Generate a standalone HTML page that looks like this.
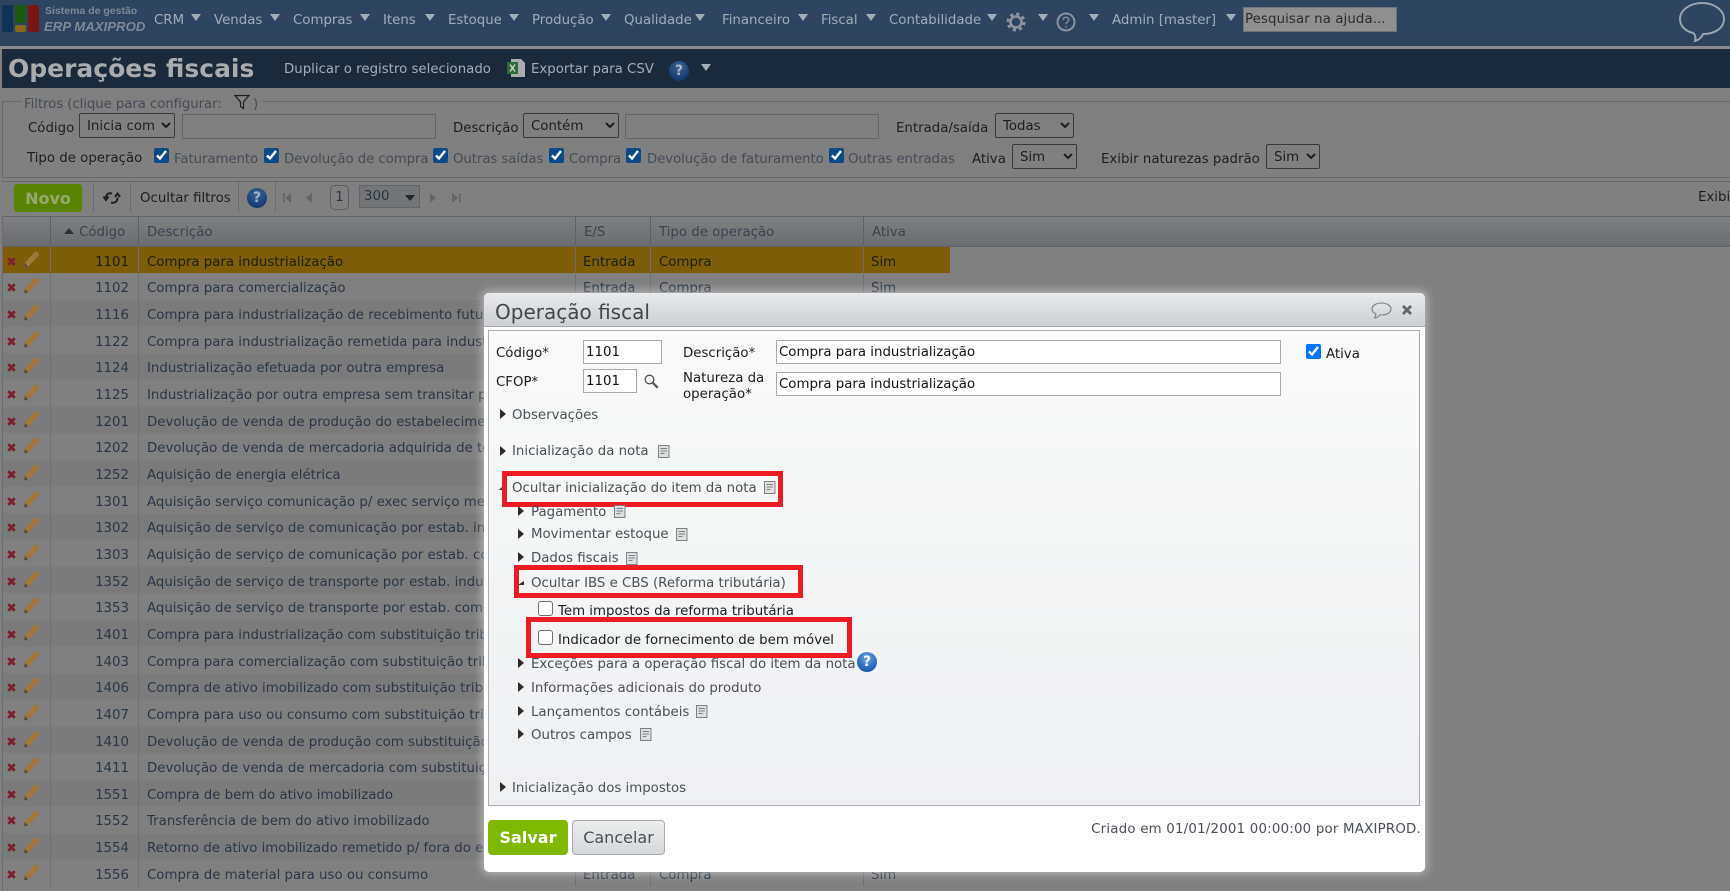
<!DOCTYPE html>
<html lang="pt-BR"><head><meta charset="utf-8"><title>Operações fiscais</title>
<style>
html,body{margin:0;padding:0;width:1730px;height:891px;overflow:hidden;background:#808080}
body{position:relative;font:13.33px/16px "DejaVu Sans",sans-serif;color:#1e2024}
.t{position:absolute;white-space:nowrap;line-height:16px}
.abs{position:absolute}
.nav{color:#a2acb8;top:13px}
.ar{position:absolute;width:0;height:0;border-left:5px solid transparent;border-right:5px solid transparent;border-top:7px solid #a4acb6}
.lab{color:#1c1e22}
.gr{color:#454c55;letter-spacing:-.08px}
.f input[type=checkbox]{position:absolute;margin:0;width:15px;height:15px;accent-color:#0a4a88}
select{position:absolute;margin:0;font:13.33px "DejaVu Sans",sans-serif;color:#1c1e22;background:#808080;border:1px solid #3a3a3a;border-radius:2px;padding:2px 0 0 3px}
.tx{position:absolute;box-sizing:border-box;background:#808080;border:1px solid #62656a}
.sep{position:absolute;width:1px;background:#6a6d72}
.hd{position:absolute;top:216px;left:2px;width:1728px;height:31px;background:linear-gradient(#7f8082,#6a6c70);border-top:1px solid #62656a;border-bottom:1px solid #5d6167;box-sizing:border-box}
.ht{color:#39424e;top:225px}
#rows{position:absolute;left:3px;top:246.7px;width:947px}
.r{position:relative;height:26.67px;background:#7b7b7b;color:#2a3646}
.r:nth-child(even){background:#808080}
.r.s{background:#7f5d08;color:#1a1f10}
.r span{position:absolute;top:8px;line-height:16px;white-space:nowrap}
.c1{left:62px;width:64px;text-align:right}.c2{left:144px;width:425px;overflow:hidden}.c3{left:580px}.c4{left:656px}.c5{left:868px}
.r svg{position:absolute}
.r .x{left:4px;top:10px}.r .p{left:20px;top:4px}
.r:after{content:"";position:absolute;left:47px;top:0;bottom:0;width:1px;background:#6e7073;box-shadow:88px 0 #6e7073,525px 0 #6e7073,600px 0 #6e7073,813px 0 #6e7073}
#dlg{position:absolute;left:484px;top:293px;width:941px;height:579px;background:#fff;border-radius:5px;box-shadow:0 0 9px 2px rgba(255,255,255,.45);color:#3d4248}
#dh{position:absolute;left:0;top:0;width:941px;height:33px;background:linear-gradient(#e9eaec,#cdcfd3);border-bottom:1px solid #a9adb3;border-radius:5px 5px 0 0}
#pn{position:absolute;left:4px;top:37px;width:932px;height:476px;box-sizing:border-box;border:1px solid #a9adb3;background:linear-gradient(#f9faf9,#eff0f2)}
#dlg .t{color:#4b5056}
#dlg .k{color:#1b1d20}
.fi{position:absolute;box-sizing:border-box;background:#fff;border:1px solid #a8a9aa;font:13.33px/23px "DejaVu Sans",sans-serif;color:#111;padding-left:2px;white-space:nowrap;overflow:hidden}
.tr{position:absolute;width:0;height:0;border-top:5px solid transparent;border-bottom:5px solid transparent;border-left:6px solid #2c2c2c}
.rb{position:absolute;box-sizing:border-box;border:5px solid #ed1c24}
.cb{position:absolute;width:15px;height:15px;box-sizing:border-box;background:#fff;border:1px solid #6f6f6f;border-radius:3px}
.nt{position:absolute;width:12px;height:13px}
.h{position:absolute;border-radius:50%;background:radial-gradient(circle at 50% 30%,#69a6e6,#1d5cb0 75%);color:#fff;font:bold 14px/20px "DejaVu Sans",sans-serif;text-align:center;width:20px;height:20px}
.h.dim{background:radial-gradient(circle at 50% 30%,#3c6492,#143a6e 75%);color:#a9b6c6}
</style></head><body>
<svg width="0" height="0" style="position:absolute"><defs>
<symbol id="x" viewBox="0 0 9 9"><path d="M1.300 1.300 7.700 7.700M7.700 1.300 1.300 7.700" stroke="#7d1f2c" stroke-width="2.800" fill="none"/></symbol>
<symbol id="pen" viewBox="0 0 17 17"><path d="M1 16.500l.8-4.800L12 .8c1.200-1.200 5 2.200 3.800 3.700L5.200 15.500z" fill="#a3763a"/><path d="M1 16.500l.8-4.800 3.400 3.800z" fill="#5a5040"/></symbol>
<symbol id="nt" viewBox="0 0 12 13"><path d="M.5.5h10.500v12H.5z" fill="#dedfe0" stroke="#7f8285"/><path d="M2.500 3.500h6.500M2.500 6h6.500M2.500 8.500h4" stroke="#7f8285"/></symbol>
</defs></svg>

<!-- Topbar -->
<div class="abs" style="left:0;top:0;width:1730px;height:46px;background:linear-gradient(#2e4561,#2e425c)"></div>
<div class="abs" style="left:0;top:46px;width:1730px;height:3px;background:#8b8b8b"></div>
<div class="abs" style="left:2px;top:5px;width:11px;height:27px;background:#0c3456;border-radius:2px"></div>
<div class="abs" style="left:15px;top:5px;width:11px;height:18px;background:#1c5a14;border-radius:2px"></div>
<div class="abs" style="left:15px;top:25px;width:11px;height:7px;background:#886a12;border-radius:2px"></div>
<div class="abs" style="left:28px;top:5px;width:11px;height:27px;background:#7b1616;border-radius:2px"></div>
<div class="t" style="left:45px;top:3px;color:#7f8894;font:bold 10.500px/16px 'Liberation Sans',sans-serif">Sistema de gestão</div>
<div class="t" style="left:44px;top:18px;color:#7f8894;font:italic bold 13.200px/18px 'Liberation Sans',sans-serif">ERP MAXIPROD</div>
<div class="t nav" style="left:154px">CRM</div><div class="ar" style="left:191px;top:14px"></div>
<div class="t nav" style="left:214px">Vendas</div><div class="ar" style="left:270px;top:14px"></div>
<div class="t nav" style="left:293px">Compras</div><div class="ar" style="left:360px;top:14px"></div>
<div class="t nav" style="left:383px">Itens</div><div class="ar" style="left:425px;top:14px"></div>
<div class="t nav" style="left:448px">Estoque</div><div class="ar" style="left:509px;top:14px"></div>
<div class="t nav" style="left:532px">Produção</div><div class="ar" style="left:601px;top:14px"></div>
<div class="t nav" style="left:624px">Qualidade</div><div class="ar" style="left:695px;top:14px"></div>
<div class="t nav" style="left:722px">Financeiro</div><div class="ar" style="left:798px;top:14px"></div>
<div class="t nav" style="left:821px">Fiscal</div><div class="ar" style="left:866px;top:14px"></div>
<div class="t nav" style="left:889px">Contabilidade</div><div class="ar" style="left:987px;top:14px"></div>
<svg class="abs" style="left:1006px;top:12px" width="20" height="20" viewBox="0 0 20 20"><g fill="none" stroke="#8b929b"><circle cx="10" cy="10" r="5.500" stroke-width="2.600"/><circle cx="10" cy="10" r="8" stroke-width="3" stroke-dasharray="3.200 3.080"/></g></svg>
<div class="ar" style="left:1038px;top:14px"></div>
<svg class="abs" style="left:1056px;top:12px" width="20" height="20" viewBox="0 0 20 20"><circle cx="10" cy="10" r="8.500" fill="none" stroke="#8b929b" stroke-width="2"/><path d="M7.300 7.800c0-3.500 5.400-3.500 5.400 0 0 2.200-2.700 2.200-2.700 4.500M10 14v1.500" fill="none" stroke="#8b929b" stroke-width="1.400"/></svg>
<div class="ar" style="left:1089px;top:14px"></div>
<div class="t nav" style="left:1112px">Admin [master]</div><div class="ar" style="left:1226px;top:14px"></div>
<div class="abs" style="left:1243px;top:7px;width:154px;height:25px;background:#8f8f8f;border:1px solid #6f7378;box-sizing:border-box"></div>
<div class="t" style="left:1245px;top:12px;color:#2a2c30;letter-spacing:.1px">Pesquisar na ajuda...</div>
<svg class="abs" style="left:1678px;top:1px" width="48" height="42" viewBox="0 0 48 42"><path d="M24 2C12 2 2 9 2 18c0 7 5 12 13 14 2 1 3 4 2 8 4-1 7-4 8-7C37 33 46 27 46 18 46 9 36 2 24 2z" fill="none" stroke="#9aa3ad" stroke-width="2"/></svg>

<!-- Title bar -->
<div class="abs" style="left:2px;top:49px;width:1728px;height:39px;background:#1a2a3a"></div>
<div class="t" style="left:8px;top:55px;color:#a9abad;font:bold 25px/28px 'DejaVu Sans',sans-serif">Operações fiscais</div>
<div class="t" style="left:284px;top:62px;color:#a2acb8">Duplicar o registro selecionado</div>
<svg class="abs" style="left:506px;top:58px" width="20" height="20" viewBox="0 0 20 20"><path d="M5 1h10l4 4v14H5z" fill="#a9aeb0"/><path d="M1 4h11v12H1z" fill="#2d6a34"/><path d="M4 6.500l5 7M9 6.500l-5 7" stroke="#c9d4cc" stroke-width="1.500"/></svg>
<div class="t" style="left:531px;top:62px;color:#a2acb8">Exportar para CSV</div>
<div class="h dim" style="left:669px;top:61px">?</div>
<div class="ar" style="left:701px;top:64px"></div>

<!-- Filters -->
<div class="abs" style="left:2px;top:101px;width:1728px;height:77px;box-sizing:border-box;border:1px solid #66696d;border-right:0"></div>
<div class="abs" style="left:22px;top:95px;width:240px;height:12px;background:#808080"></div>
<div class="t gr" style="left:24px;top:97px">Filtros (clique para configurar:</div>
<svg class="abs" style="left:234px;top:94px" width="16" height="16" viewBox="0 0 16 16"><path d="M1 1.500h14L9.500 8v6.500l-3-2V8z" fill="none" stroke="#1c1e22" stroke-width="1.200"/></svg>
<div class="t gr" style="left:253px;top:97px">)</div>
<div class="f">
<div class="t lab" style="left:28px;top:121px">Código</div>
<select style="left:79px;top:113px;width:96px;height:25px"><option>Inicia com</option></select>
<div class="tx" style="left:182px;top:114px;width:254px;height:25px"></div>
<div class="t lab" style="left:453px;top:121px">Descrição</div>
<select style="left:523px;top:113px;width:96px;height:25px"><option>Contém</option></select>
<div class="tx" style="left:625px;top:114px;width:254px;height:25px"></div>
<div class="t lab" style="left:896px;top:121px">Entrada/saída</div>
<select style="left:995px;top:113px;width:79px;height:25px"><option>Todas</option></select>
<div class="t lab" style="left:27px;top:151px">Tipo de operação</div>
<input type="checkbox" checked style="left:154px;top:148px"><div class="t gr" style="left:174px;top:152px">Faturamento</div>
<input type="checkbox" checked style="left:264px;top:148px"><div class="t gr" style="left:284px;top:152px">Devolução de compra</div>
<input type="checkbox" checked style="left:433px;top:148px"><div class="t gr" style="left:453px;top:152px">Outras saídas</div>
<input type="checkbox" checked style="left:549px;top:148px"><div class="t gr" style="left:569px;top:152px">Compra</div>
<input type="checkbox" checked style="left:626px;top:148px"><div class="t gr" style="left:647px;top:152px">Devolução de faturamento</div>
<input type="checkbox" checked style="left:829px;top:148px"><div class="t gr" style="left:848px;top:152px">Outras entradas</div>
<div class="t lab" style="left:972px;top:152px">Ativa</div>
<select style="left:1012px;top:144px;width:65px;height:25px"><option>Sim</option></select>
<div class="t lab" style="left:1101px;top:152px">Exibir naturezas padrão</div>
<select style="left:1266px;top:144px;width:54px;height:25px"><option>Sim</option></select>
</div>

<!-- Toolbar -->
<div class="abs" style="left:2px;top:181px;width:1728px;height:1px;background:#66696d"></div>
<div class="abs" style="left:14px;top:184px;width:68px;height:28px;background:#5a8302;border-radius:3px;color:#95a870;font:bold 16px/30px 'DejaVu Sans',sans-serif;text-align:center">Novo</div>
<div class="sep" style="left:93px;top:182px;height:30px"></div>
<svg class="abs" style="left:103px;top:191px" width="18" height="14" viewBox="0 0 18 14"><g fill="none" stroke="#222" stroke-width="2"><path d="M9 2.500C5 1.500 3 3.500 3 7.500M.5 5.500 3 9l2.500-3.500M8 11.500c4 1 6.500-1 6.500-5M12 6l2.500-3.500L17 6"/></g></svg>
<div class="sep" style="left:130px;top:182px;height:30px"></div>
<div class="t lab" style="left:140px;top:191px">Ocultar filtros</div>
<div class="sep" style="left:238px;top:182px;height:30px"></div>
<div class="h dim" style="left:247px;top:188px;color:#9fb1c9">?</div>
<div class="sep" style="left:275px;top:182px;height:30px"></div>
<svg class="abs" style="left:282px;top:192px" width="40" height="12" viewBox="0 0 40 12"><path d="M1 1h1.500v10H1zM9 1v10L3.500 6zM30 1v10l-6-5z" fill="#62656a"/></svg>
<div class="abs" style="left:330px;top:185px;width:19px;height:25px;box-sizing:border-box;border:1px solid #5a5d62;border-radius:5px;text-align:center;line-height:24px;color:#2a3646">1</div>
<div class="abs" style="left:359px;top:185px;width:61px;height:23px;box-sizing:border-box;border:1px solid #62656a;background:#747577"></div>
<div class="t" style="left:364px;top:189px;color:#2a3646">300</div>
<div class="abs" style="left:405px;top:195px;width:0;height:0;border-left:5px solid transparent;border-right:5px solid transparent;border-top:6px solid #23262a"></div>
<svg class="abs" style="left:428px;top:192px" width="36" height="12" viewBox="0 0 36 12"><path d="M2 1v10l6-5zM24 1v10l6-5zM31 1h1.500v10H31z" fill="#62656a"/></svg>
<div class="t lab" style="left:1698px;top:190px">Exibi</div>

<!-- Table head -->
<div class="hd"></div>
<div class="sep" style="left:50px;top:216px;height:31px;background:#5d6167"></div>
<div class="sep" style="left:138px;top:216px;height:31px;background:#5d6167"></div>
<div class="sep" style="left:575px;top:216px;height:31px;background:#5d6167"></div>
<div class="sep" style="left:650px;top:216px;height:31px;background:#5d6167"></div>
<div class="sep" style="left:863px;top:216px;height:31px;background:#5d6167"></div>
<div class="abs" style="left:64px;top:228px;width:0;height:0;border-left:5px solid transparent;border-right:5px solid transparent;border-bottom:6px solid #2c2f33"></div>
<div class="t ht" style="left:79px">Código</div>
<div class="t ht" style="left:147px">Descrição</div>
<div class="t ht" style="left:584px">E/S</div>
<div class="t ht" style="left:659px">Tipo de operação</div>
<div class="t ht" style="left:872px">Ativa</div>

<div class="abs" style="left:2px;top:216px;width:1px;height:675px;background:#6a6d72"></div>
<div id="rows">
<div class="r s"><svg class="x" width="9" height="9"><use href="#x"/></svg><svg class="p" width="17" height="17"><use href="#pen"/></svg><span class="c1">1101</span><span class="c2">Compra para industrialização</span><span class="c3">Entrada</span><span class="c4">Compra</span><span class="c5">Sim</span></div>
<div class="r"><svg class="x" width="9" height="9"><use href="#x"/></svg><svg class="p" width="17" height="17"><use href="#pen"/></svg><span class="c1">1102</span><span class="c2">Compra para comercialização</span><span class="c3">Entrada</span><span class="c4">Compra</span><span class="c5">Sim</span></div>
<div class="r"><svg class="x" width="9" height="9"><use href="#x"/></svg><svg class="p" width="17" height="17"><use href="#pen"/></svg><span class="c1">1116</span><span class="c2">Compra para industrialização de recebimento futuro</span></div>
<div class="r"><svg class="x" width="9" height="9"><use href="#x"/></svg><svg class="p" width="17" height="17"><use href="#pen"/></svg><span class="c1">1122</span><span class="c2">Compra para industrialização remetida para industrialização</span></div>
<div class="r"><svg class="x" width="9" height="9"><use href="#x"/></svg><svg class="p" width="17" height="17"><use href="#pen"/></svg><span class="c1">1124</span><span class="c2">Industrialização efetuada por outra empresa</span></div>
<div class="r"><svg class="x" width="9" height="9"><use href="#x"/></svg><svg class="p" width="17" height="17"><use href="#pen"/></svg><span class="c1">1125</span><span class="c2">Industrialização por outra empresa sem transitar pela empresa</span></div>
<div class="r"><svg class="x" width="9" height="9"><use href="#x"/></svg><svg class="p" width="17" height="17"><use href="#pen"/></svg><span class="c1">1201</span><span class="c2">Devolução de venda de produção do estabelecimento</span></div>
<div class="r"><svg class="x" width="9" height="9"><use href="#x"/></svg><svg class="p" width="17" height="17"><use href="#pen"/></svg><span class="c1">1202</span><span class="c2">Devolução de venda de mercadoria adquirida de terceiros</span></div>
<div class="r"><svg class="x" width="9" height="9"><use href="#x"/></svg><svg class="p" width="17" height="17"><use href="#pen"/></svg><span class="c1">1252</span><span class="c2">Aquisição de energia elétrica</span></div>
<div class="r"><svg class="x" width="9" height="9"><use href="#x"/></svg><svg class="p" width="17" height="17"><use href="#pen"/></svg><span class="c1">1301</span><span class="c2">Aquisição serviço comunicação p/ exec serviço mesma natureza</span></div>
<div class="r"><svg class="x" width="9" height="9"><use href="#x"/></svg><svg class="p" width="17" height="17"><use href="#pen"/></svg><span class="c1">1302</span><span class="c2">Aquisição de serviço de comunicação por estab. industrial</span></div>
<div class="r"><svg class="x" width="9" height="9"><use href="#x"/></svg><svg class="p" width="17" height="17"><use href="#pen"/></svg><span class="c1">1303</span><span class="c2">Aquisição de serviço de comunicação por estab. comercial</span></div>
<div class="r"><svg class="x" width="9" height="9"><use href="#x"/></svg><svg class="p" width="17" height="17"><use href="#pen"/></svg><span class="c1">1352</span><span class="c2">Aquisição de serviço de transporte por estab. industrial</span></div>
<div class="r"><svg class="x" width="9" height="9"><use href="#x"/></svg><svg class="p" width="17" height="17"><use href="#pen"/></svg><span class="c1">1353</span><span class="c2">Aquisição de serviço de transporte por estab. comercial</span></div>
<div class="r"><svg class="x" width="9" height="9"><use href="#x"/></svg><svg class="p" width="17" height="17"><use href="#pen"/></svg><span class="c1">1401</span><span class="c2">Compra para industrialização com substituição tributária</span></div>
<div class="r"><svg class="x" width="9" height="9"><use href="#x"/></svg><svg class="p" width="17" height="17"><use href="#pen"/></svg><span class="c1">1403</span><span class="c2">Compra para comercialização com substituição tributária</span></div>
<div class="r"><svg class="x" width="9" height="9"><use href="#x"/></svg><svg class="p" width="17" height="17"><use href="#pen"/></svg><span class="c1">1406</span><span class="c2">Compra de ativo imobilizado com substituição tributária</span></div>
<div class="r"><svg class="x" width="9" height="9"><use href="#x"/></svg><svg class="p" width="17" height="17"><use href="#pen"/></svg><span class="c1">1407</span><span class="c2">Compra para uso ou consumo com substituição tributária</span></div>
<div class="r"><svg class="x" width="9" height="9"><use href="#x"/></svg><svg class="p" width="17" height="17"><use href="#pen"/></svg><span class="c1">1410</span><span class="c2">Devolução de venda de produção com substituição tributária</span></div>
<div class="r"><svg class="x" width="9" height="9"><use href="#x"/></svg><svg class="p" width="17" height="17"><use href="#pen"/></svg><span class="c1">1411</span><span class="c2">Devolução de venda de mercadoria com substituição tributária</span></div>
<div class="r"><svg class="x" width="9" height="9"><use href="#x"/></svg><svg class="p" width="17" height="17"><use href="#pen"/></svg><span class="c1">1551</span><span class="c2">Compra de bem do ativo imobilizado</span></div>
<div class="r"><svg class="x" width="9" height="9"><use href="#x"/></svg><svg class="p" width="17" height="17"><use href="#pen"/></svg><span class="c1">1552</span><span class="c2">Transferência de bem do ativo imobilizado</span></div>
<div class="r"><svg class="x" width="9" height="9"><use href="#x"/></svg><svg class="p" width="17" height="17"><use href="#pen"/></svg><span class="c1">1554</span><span class="c2">Retorno de ativo imobilizado remetido p/ fora do estabelecimento</span></div>
<div class="r"><svg class="x" width="9" height="9"><use href="#x"/></svg><svg class="p" width="17" height="17"><use href="#pen"/></svg><span class="c1">1556</span><span class="c2">Compra de material para uso ou consumo</span><span class="c3">Entrada</span><span class="c4">Compra</span><span class="c5">Sim</span></div>
</div>

<!-- Dialog (coordinates relative to 484,293) -->
<div id="dlg">
<div id="dh"></div>
<div class="t" style="left:11px;top:7px;font-size:20px;line-height:24px;color:#43474c!important">Operação fiscal</div>
<svg class="abs" style="left:887px;top:9px" width="21" height="17" viewBox="0 0 21 17"><path d="M10.500 1C5 1 1 3.700 1 7c0 2 1.500 3.800 4 4.800 0 1.400-.5 2.800-1.300 4 2 0 3.800-1.200 5-2.900.6.100 1.200.100 1.800.100 5.500 0 9.500-2.700 9.500-6S16 1 10.500 1z" fill="none" stroke="#7c8085" stroke-width="1.100"/></svg>
<svg class="abs" style="left:917px;top:11px" width="12" height="12" viewBox="0 0 12 12"><path d="M2 2l8 8M10 2l-8 8" stroke="#62666b" stroke-width="2.800" fill="none"/></svg>
<div id="pn"></div>

<div class="t k" style="left:12px;top:53px">Código*</div>
<div class="fi" style="left:99px;top:47px;width:79px;height:24px">1101</div>
<div class="t k" style="left:12px;top:82px">CFOP*</div>
<div class="fi" style="left:99px;top:76px;width:54px;height:24px">1101</div>
<svg class="abs" style="left:160px;top:81px" width="15" height="15" viewBox="0 0 15 15"><circle cx="5.500" cy="5.500" r="4.300" fill="none" stroke="#555" stroke-width="1.300"/><path d="M8.800 8.800l5 5" stroke="#555" stroke-width="2.200"/></svg>
<div class="t k" style="left:199px;top:53px">Descrição*</div>
<div class="fi" style="left:292px;top:47px;width:505px;height:24px">Compra para industrialização</div>
<div class="t k" style="left:199px;top:78px">Natureza da</div>
<div class="t k" style="left:199px;top:94px">operação*</div>
<div class="fi" style="left:292px;top:79px;width:505px;height:24px">Compra para industrialização</div>
<input type="checkbox" checked style="position:absolute;left:822px;top:51px;margin:0;width:15px;height:15px">
<div class="t k" style="left:842px;top:54px">Ativa</div>

<div class="tr" style="left:16px;top:116px"></div><div class="t" style="left:28px;top:115px">Observações</div>
<div class="tr" style="left:16px;top:153px"></div><div class="t" style="left:28px;top:151px">Inicialização da nota</div><svg class="nt" style="left:174px;top:152px"><use href="#nt"/></svg>
<div class="abs" style="left:15px;top:192px;width:0;height:0;border-left:5px solid transparent;border-bottom:5px solid #2c2c2c"></div>
<div class="t" style="left:28px;top:188px">Ocultar inicialização do item da nota</div><svg class="nt" style="left:280px;top:188px"><use href="#nt"/></svg>
<div class="rb" style="left:18px;top:178px;width:281px;height:36px"></div>

<div class="tr" style="left:34px;top:213px"></div><div class="t" style="left:47px;top:212px">Pagamento</div><svg class="nt" style="left:130px;top:212px"><use href="#nt"/></svg>
<div class="tr" style="left:34px;top:236px"></div><div class="t" style="left:47px;top:234px">Movimentar estoque</div><svg class="nt" style="left:192px;top:235px"><use href="#nt"/></svg>
<div class="tr" style="left:34px;top:259px"></div><div class="t" style="left:47px;top:258px">Dados fiscais</div><svg class="nt" style="left:142px;top:259px"><use href="#nt"/></svg>
<div class="abs" style="left:34px;top:284px;width:0;height:0;border-top:4px solid transparent;border-bottom:4px solid #2c2c2c;border-left:6px solid transparent"></div>
<div class="t" style="left:47px;top:283px">Ocultar IBS e CBS (Reforma tributária)</div>
<div class="rb" style="left:30px;top:272px;width:289px;height:33px"></div>

<div class="cb" style="left:54px;top:308px"></div><div class="t k" style="left:74px;top:311px">Tem impostos da reforma tributária</div>
<div class="tr" style="left:34px;top:365px"></div><div class="t" style="left:47px;top:364px">Exceções para a operação fiscal do item da nota</div>
<div class="rb" style="left:42px;top:324px;width:326px;height:41px"></div>
<div class="cb" style="left:54px;top:337px"></div><div class="t k" style="left:74px;top:340px">Indicador de fornecimento de bem móvel</div>
<div class="h" style="left:373px;top:359px">?</div>
<div class="tr" style="left:34px;top:389px"></div><div class="t" style="left:47px;top:388px">Informações adicionais do produto</div>
<div class="tr" style="left:34px;top:413px"></div><div class="t" style="left:47px;top:412px">Lançamentos contábeis</div><svg class="nt" style="left:212px;top:412px"><use href="#nt"/></svg>
<div class="tr" style="left:34px;top:436px"></div><div class="t" style="left:47px;top:435px">Outros campos</div><svg class="nt" style="left:156px;top:435px"><use href="#nt"/></svg>
<div class="tr" style="left:16px;top:489px"></div><div class="t" style="left:28px;top:488px">Inicialização dos impostos</div>

<div class="abs" style="left:4px;top:527px;width:80px;height:35px;background:#7fb800;border-radius:4px;color:#fff;font:bold 16px/35px 'DejaVu Sans',sans-serif;text-align:center">Salvar</div>
<div class="abs" style="left:88px;top:527px;width:93px;height:35px;box-sizing:border-box;background:linear-gradient(#eceded,#d5d7da);border:1px solid #a6a9ad;border-radius:4px;color:#4b5056;font:16px/33px 'DejaVu Sans',sans-serif;text-align:center">Cancelar</div>
<div class="t" style="right:4px;top:529px;letter-spacing:.22px">Criado em 01/01/2001 00:00:00 por MAXIPROD.</div>
</div>
</body></html>
